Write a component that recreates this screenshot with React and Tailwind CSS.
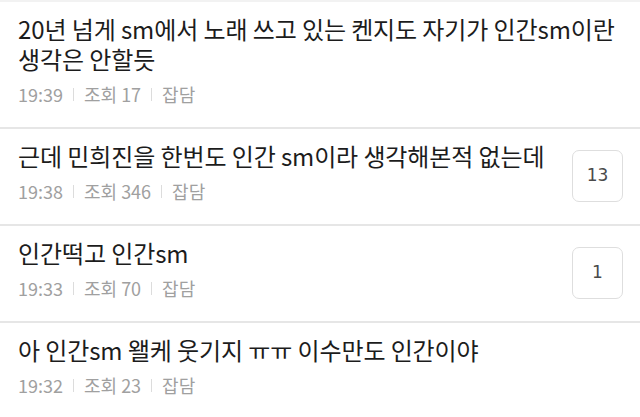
import React from 'react';

const posts = [
  { title: '20년 넘게 sm에서 노래 쓰고 있는 켄지도 자기가 인간sm이란 생각은 안할듯', time: '19:39', views: 17, category: '잡담' },
  { title: '근데 민희진을 한번도 인간 sm이라 생각해본적 없는데', time: '19:38', views: 346, category: '잡담', comments: 13 },
  { title: '인간떡고 인간sm', time: '19:33', views: 70, category: '잡담', comments: 1 },
  { title: '아 인간sm 왤케 웃기지 ㅠㅠ 이수만도 인간이야', time: '19:32', views: 23, category: '잡담' },
];

const Divider = () => <span className="mx-[10px] inline-block h-[13px] w-px bg-[#dcdcdc]" />;

const PostRow = ({ post }) => (
  <div className="flex justify-between pl-[18px] pr-[17px] pt-[12px] pb-[23px]">
    <div className="min-w-0 flex-1">
      <p className="break-keep text-[24px] leading-[30px] tracking-[-0.1px] text-[#1c1c1c]">{post.title}</p>
      <div className="mt-[10px] flex items-center text-[18px] leading-[20px] text-[#a0a0a0]">
        <span>{post.time}</span>
        <Divider />
        <span>조회 {post.views}</span>
        <Divider />
        <span>{post.category}</span>
      </div>
    </div>
    {post.comments !== undefined && (
      <div
        className="mb-[-1px] ml-4 flex h-[52px] w-[51px] shrink-0 items-center justify-center self-end rounded-[7px] border border-[#dedede] text-[17px] text-[#4a4a4a]"
        style={{ fontFamily: '"DejaVu Sans", sans-serif' }}
      >
        {post.comments}
      </div>
    )}
  </div>
);

export default function App() {
  return (
    <div
      className="min-h-screen w-[640px] border-t-2 border-[#f2f2f2] bg-white"
      style={{ fontFamily: '"Noto Sans CJK KR", "Noto Sans", sans-serif' }}
    >
      {posts.map((post, i) => (
        <div key={i} className={i > 0 ? 'border-t-2 border-[#e6e6e6]' : ''}>
          <PostRow post={post} />
        </div>
      ))}
    </div>
  );
}
